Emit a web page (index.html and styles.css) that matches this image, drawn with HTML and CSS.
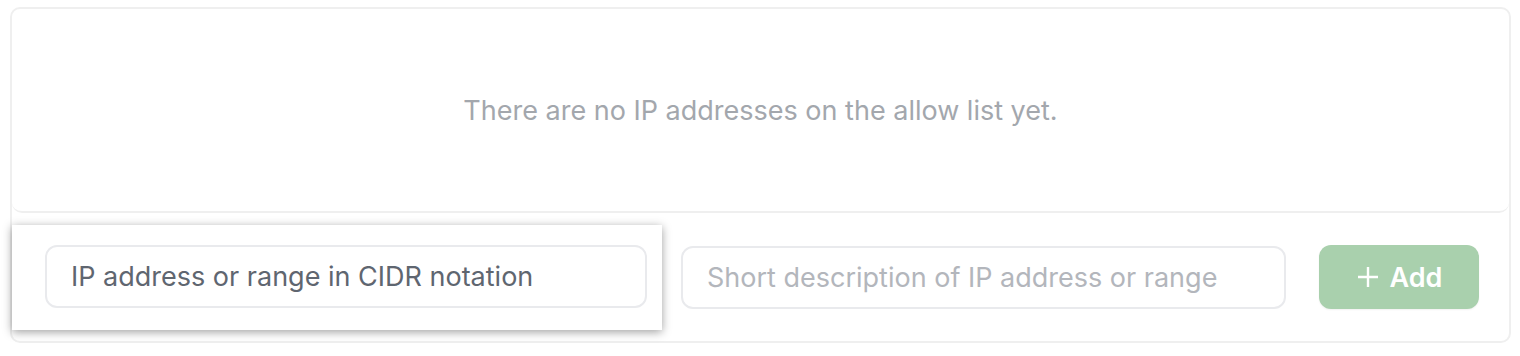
FILE: index.html
```html
<!DOCTYPE html>
<html>
<head>
<meta charset="utf-8">
<link rel="stylesheet" href="styles.css">
</head>
<body>
<div class="panel">
  <div class="empty">
    <p class="empty-text">There are no IP addresses on the allow list yet.</p>
  </div>
  <form class="add-row">
    <div class="highlight">
      <input class="field field-ip" type="text" placeholder="IP address or range in CIDR notation">
    </div>
    <input class="field field-desc" type="text" placeholder="Short description of IP address or range">
    <button class="btn-add" type="button" disabled>
      <svg class="plus" width="24" height="24" viewBox="0 0 24 24"><path d="M12 2v20M2 12h20" stroke="#fff" stroke-width="2.4" fill="none"/></svg>
      <span>Add</span>
    </button>
  </form>
</div>
</body>
</html>
```
FILE: styles.css
```css
* { box-sizing: border-box; }
html, body { margin: 0; background: #fff; }
body {
  padding: 7px 10px 0 10px;
  font-family: Inter, Roboto, "Noto Sans", sans-serif;
}
.panel {
  width: 1501px;
  height: 336px;
  border: 2px solid #efefef;
  border-radius: 10px;
  display: flex;
  flex-direction: column;
}
.empty {
  height: 204px;
  border-bottom: 2px solid #efefef;
  border-radius: 0 0 10px 10px;
  display: flex;
  align-items: center;
  justify-content: center;
}
.empty-text {
  margin: 0;
  font-size: 27px;
  color: #a3a7ad;
  letter-spacing: 0;
}
.add-row {
  flex: 1;
  margin: 0;
  display: flex;
  align-items: center;
  padding-right: 30px;
}
.highlight {
  width: 650px;
  padding: 20px 15px 22px 33px;
  background: #fff;
  box-shadow: 0 2px 9px rgba(0, 0, 0, 0.38);
}
.field {
  height: 63px;
  border: 2px solid #e9eaed;
  border-radius: 12px;
  background: #fff;
  padding: 0 24px;
  font-family: Inter, Roboto, "Noto Sans", sans-serif;
  font-size: 27px;
  outline: none;
}
.field-ip { width: 602px; }
.field-ip::placeholder { color: #5f6670; }
.field-desc {
  width: 605px;
  margin-left: 19px;
}
.field-desc::placeholder { color: #b3b6bc; }
.btn-add {
  margin-left: auto;
  width: 160px;
  height: 64px;
  border: none;
  border-radius: 12px;
  background: #a9d0ad;
  color: #fff;
  font-family: Inter, Roboto, "Noto Sans", sans-serif;
  font-size: 27px;
  font-weight: 600;
  display: flex;
  align-items: center;
  justify-content: center;
  gap: 10px;
  padding: 0;
  box-shadow: 0 1px 2px rgba(0,0,0,0.06);
}
.plus { display: block; }
```
